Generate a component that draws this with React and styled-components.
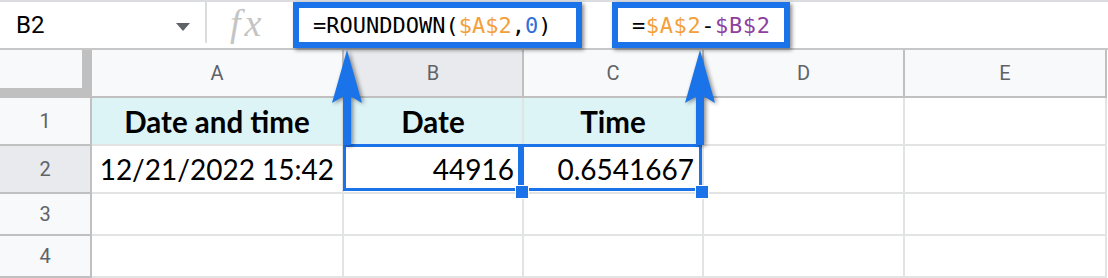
import styled, { createGlobalStyle } from 'styled-components';

const BLUE = '#1a73e8';

const GlobalStyle = createGlobalStyle`
  html, body {
    margin: 0;
    padding: 0;
    background: #fff;
  }
  body {
    width: 1108px;
    height: 278px;
    overflow: hidden;
    font-family: Roboto, "Liberation Sans", sans-serif;
  }
`;

const Page = styled.div`
  position: relative;
  width: 1108px;
  height: 278px;
  overflow: hidden;
`;

// Formula bar
const Toolbar = styled.div`
  display: flex;
  align-items: stretch;
  height: 46px;
  border-top: 2px solid #dadce0;
  border-bottom: 2px solid #c7c7c7;
  background: #fff;
`;

const NameBox = styled.div`
  width: 205px;
  box-sizing: border-box;
  display: flex;
  align-items: center;
  justify-content: space-between;
  padding: 0 15px 0 16px;
  font-size: 24px;
  color: #000;
`;

const Caret = styled.span`
  width: 0;
  height: 0;
  border-left: 7.5px solid transparent;
  border-right: 7.5px solid transparent;
  border-top: 8px solid #5f6368;
  margin-top: 3px;
`;

const Divider = styled.div`
  width: 2px;
  height: 41px;
  align-self: flex-start;
  background: #dadce0;
`;

const FxLabel = styled.div`
  width: 86px;
  box-sizing: border-box;
  padding: 0 0 4px 23px;
  display: flex;
  align-items: center;
  font-family: "Liberation Serif", serif;
  font-style: italic;
  font-size: 38px;
  letter-spacing: 4px;
  color: #c4c4c4;
`;

const Formulas = styled.div`
  display: flex;
  gap: 30px;
`;

const FormulaBox = styled.div`
  position: relative;
  z-index: 2;
  width: ${(p) => p.$width}px;
  box-sizing: border-box;
  border: 6px solid ${BLUE};
  box-shadow: 2px 2px 4px rgba(0, 0, 0, 0.45);
  padding-left: 14px;
  display: flex;
  align-items: center;
  background: #fff;
  font-family: "DejaVu Sans Mono", monospace;
  font-size: 22px;
  letter-spacing: ${(p) => p.$spacing || 0}px;
  color: #000;
  white-space: nowrap;
`;

const Ref = styled.span`
  color: ${(p) => p.$color};
`;

// Grid
const Sheet = styled.div`
  display: grid;
  grid-template-columns: 92px 252px 180px 180px 201px 202px;
  grid-template-rows: 48px 48px 48px 42px 42px;
`;

const Corner = styled.div`
  box-sizing: border-box;
  background: #f8f9fa;
  border-right: 10px solid #c0c0c0;
  border-bottom: 10px solid #c0c0c0;
`;

const Header = styled.div`
  box-sizing: border-box;
  display: flex;
  align-items: center;
  justify-content: center;
  background: ${(p) => (p.$active ? '#e8eaed' : '#f8f9fa')};
  border-right: 2px solid #c0c0c0;
  border-bottom: 2px solid #c0c0c0;
  font-size: 20px;
  color: #5f6368;
`;

const Cell = styled.div`
  position: relative;
  box-sizing: border-box;
  display: flex;
  align-items: center;
  justify-content: ${(p) => p.$align || 'flex-start'};
  padding: 0 8px;
  background: ${(p) => p.$bg || '#fff'};
  border-right: 2px solid #e2e3e3;
  border-bottom: 2px solid #e2e3e3;
  font-family: Lato, "Open Sans", sans-serif;
  font-size: ${(p) => (p.$bold ? 29.5 : 28)}px;
  font-weight: ${(p) => (p.$bold ? 700 : 400)};
  color: #000;
  white-space: nowrap;

  ${(p) =>
    p.$selected &&
    `
    &::after {
      content: '';
      position: absolute;
      top: -2px;
      bottom: 1px;
      left: ${p.$selected === 'first' ? '-1px' : '-3px'};
      right: ${p.$selected === 'first' ? '1px' : '0'};
      border: 3px solid ${BLUE};
      z-index: 1;
    }
  `}
`;

const FillHandle = styled.span`
  position: absolute;
  left: 171px;
  top: 39px;
  width: 12px;
  height: 12px;
  background: ${BLUE};
  border: 1px solid #fff;
  z-index: 2;
`;

// Annotation arrows
const Arrow = styled.svg`
  position: absolute;
  top: 48px;
  left: ${(p) => p.$x}px;
  width: 32px;
  height: 100px;
  overflow: visible;
  filter: drop-shadow(2px 1px 2px rgba(0, 0, 0, 0.45));
  z-index: 3;
`;

const columns = ['A', 'B', 'C', 'D', 'E'];

const rows = [
  {
    num: 1,
    cells: [
      { text: 'Date and time', bold: true, align: 'center', bg: '#ddf4f7' },
      { text: 'Date', bold: true, align: 'center', bg: '#ddf4f7' },
      { text: 'Time', bold: true, align: 'center', bg: '#ddf4f7' },
      {},
      {},
    ],
  },
  {
    num: 2,
    active: true,
    cells: [
      { text: '12/21/2022 15:42', align: 'flex-end' },
      { text: '44916', align: 'flex-end', selected: 'first' },
      { text: '0.6541667', align: 'flex-end', selected: 'second' },
      {},
      {},
    ],
  },
  { num: 3, cells: [{}, {}, {}, {}, {}] },
  { num: 4, cells: [{}, {}, {}, {}, {}] },
];

const ArrowShape = ({ x }) => (
  <Arrow $x={x} viewBox="0 0 32 100">
    <path d="M15 2 L30 55 L19 48.5 L19 97 L11 97 L11 48.5 L0 55 Z" fill={BLUE} />
  </Arrow>
);

export default function App() {
  return (
    <Page>
      <GlobalStyle />
      <Toolbar>
        <NameBox>
          B2
          <Caret />
        </NameBox>
        <Divider />
        <FxLabel>fx</FxLabel>
        <Formulas>
          <FormulaBox $width={289}>
            =ROUNDDOWN(<Ref $color="#f4a03a">$A$2</Ref>,<Ref $color="#2f6fd8">0</Ref>)
          </FormulaBox>
          <FormulaBox $width={178} $spacing={0.6}>
            =<Ref $color="#f4a03a">$A$2</Ref>-<Ref $color="#8e3f9f">$B$2</Ref>
          </FormulaBox>
        </Formulas>
      </Toolbar>

      <Sheet>
        <Corner />
        {columns.map((c) => (
          <Header key={c} $active={c === 'B'}>
            {c}
          </Header>
        ))}
        {rows.map((row) => [
          <Header key={`h${row.num}`} $active={row.active}>
            {row.num}
          </Header>,
          ...row.cells.map((cell, i) => (
            <Cell
              key={`${row.num}-${i}`}
              $align={cell.align}
              $bold={cell.bold}
              $bg={cell.bg}
              $selected={cell.selected}
            >
              {cell.text}
              {cell.selected && <FillHandle />}
            </Cell>
          )),
        ])}
      </Sheet>

      <ArrowShape x={332} />
      <ArrowShape x={685} />
    </Page>
  );
}
